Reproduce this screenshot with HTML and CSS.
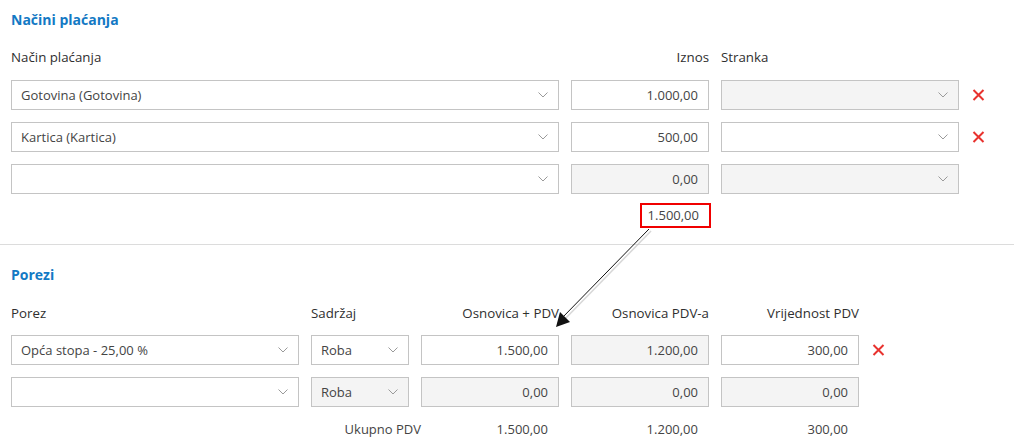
FILE: index.html
```html
<!DOCTYPE html>
<html lang="hr">
<head>
<meta charset="utf-8">
<title>Načini plaćanja</title>
<link rel="stylesheet" href="styles.css">
</head>
<body>
<div class="page">
  <section class="sec">
    <h2 class="title">Načini plaćanja</h2>
    <div class="grid pay-grid head">
      <div class="lbl">Način plaćanja</div>
      <div class="lbl r">Iznos</div>
      <div class="lbl">Stranka</div>
      <div></div>
    </div>
    <div class="grid pay-grid row">
      <div class="field sel"><span>Gotovina (Gotovina)</span><svg class="chev" viewBox="0 0 10 6"><path d="M0.5 0.5 L5 5 L9.5 0.5"/></svg></div>
      <div class="field num">1.000,00</div>
      <div class="field sel dis"><span></span><svg class="chev" viewBox="0 0 10 6"><path d="M0.5 0.5 L5 5 L9.5 0.5"/></svg></div>
      <svg class="del" viewBox="0 0 12 12"><path d="M1 1 L11 11 M11 1 L1 11"/></svg>
    </div>
    <div class="grid pay-grid row">
      <div class="field sel"><span>Kartica (Kartica)</span><svg class="chev" viewBox="0 0 10 6"><path d="M0.5 0.5 L5 5 L9.5 0.5"/></svg></div>
      <div class="field num">500,00</div>
      <div class="field sel"><span></span><svg class="chev" viewBox="0 0 10 6"><path d="M0.5 0.5 L5 5 L9.5 0.5"/></svg></div>
      <svg class="del" viewBox="0 0 12 12"><path d="M1 1 L11 11 M11 1 L1 11"/></svg>
    </div>
    <div class="grid pay-grid row">
      <div class="field sel"><span></span><svg class="chev" viewBox="0 0 10 6"><path d="M0.5 0.5 L5 5 L9.5 0.5"/></svg></div>
      <div class="field num dis">0,00</div>
      <div class="field sel dis"><span></span><svg class="chev" viewBox="0 0 10 6"><path d="M0.5 0.5 L5 5 L9.5 0.5"/></svg></div>
      <div></div>
    </div>
    <div class="grid pay-grid total-row">
      <div></div>
      <div class="total-cell"><span class="total-box">1.500,00</span></div>
      <div></div>
      <div></div>
    </div>
  </section>

  <div class="divider"></div>

  <section class="sec">
    <h2 class="title title2">Porezi</h2>
    <div class="grid tax-grid head">
      <div class="lbl">Porez</div>
      <div class="lbl">Sadržaj</div>
      <div class="lbl r">Osnovica + PDV</div>
      <div class="lbl r">Osnovica PDV-a</div>
      <div class="lbl r">Vrijednost PDV</div>
      <div></div>
    </div>
    <div class="grid tax-grid row">
      <div class="field sel"><span>Opća stopa - 25,00 %</span><svg class="chev" viewBox="0 0 10 6"><path d="M0.5 0.5 L5 5 L9.5 0.5"/></svg></div>
      <div class="field sel"><span>Roba</span><svg class="chev" viewBox="0 0 10 6"><path d="M0.5 0.5 L5 5 L9.5 0.5"/></svg></div>
      <div class="field num">1.500,00</div>
      <div class="field num dis">1.200,00</div>
      <div class="field num">300,00</div>
      <svg class="del" viewBox="0 0 12 12"><path d="M1 1 L11 11 M11 1 L1 11"/></svg>
    </div>
    <div class="grid tax-grid row">
      <div class="field sel"><span></span><svg class="chev" viewBox="0 0 10 6"><path d="M0.5 0.5 L5 5 L9.5 0.5"/></svg></div>
      <div class="field sel dis"><span>Roba</span><svg class="chev" viewBox="0 0 10 6"><path d="M0.5 0.5 L5 5 L9.5 0.5"/></svg></div>
      <div class="field num dis">0,00</div>
      <div class="field num dis">0,00</div>
      <div class="field num dis">0,00</div>
      <div></div>
    </div>
    <div class="grid tax-grid sum-row">
      <div class="sum-label">Ukupno PDV</div>
      <div class="sum">1.500,00</div>
      <div class="sum">1.200,00</div>
      <div class="sum">300,00</div>
      <div></div>
    </div>
  </section>

  <svg class="arrow" viewBox="0 0 1014 442" width="1014" height="442">
    <line x1="651" y1="231" x2="563" y2="321" stroke="#bdbdbd" stroke-width="1.5" opacity="0.6"/>
    <line x1="649" y1="229" x2="562" y2="318" stroke="#111" stroke-width="1"/>
    <polygon points="556,327 560,312 570,322" fill="#111"/>
  </svg>
</div>
</body>
</html>
```

FILE: styles.css
```css
* { box-sizing: border-box; }

html, body {
  margin: 0;
  padding: 0;
  background: #ffffff;
}

body {
  font-family: "Open Sans", "Liberation Sans", sans-serif;
  font-size: 13px;
  color: #333;
}

.page {
  position: relative;
  width: 1014px;
  height: 442px;
  padding-top: 10px;
  overflow: hidden;
}

.sec {
  padding: 0 11px;
}

.title {
  margin: 0;
  font-size: 14px;
  line-height: 19px;
  font-weight: 700;
  color: #1379c4;
}

.title2 {
  margin-top: 20px;
}

.grid {
  display: grid;
  column-gap: 12px;
  align-items: center;
}

.pay-grid {
  grid-template-columns: 548px 138px 238px auto;
}

.tax-grid {
  grid-template-columns: 288px 98px 138px 138px 138px auto;
}

.head {
  margin-top: 19px;
  line-height: 18px;
}

.tax-grid.head {
  margin-top: 20px;
}

.lbl {
  color: #2f2f2f;
  font-size: 13.3px;
  white-space: nowrap;
}

.lbl.r {
  text-align: right;
}

.row {
  margin-top: 12px;
}

.head + .row {
  margin-top: 14px;
}

.tax-grid.head + .row {
  margin-top: 13px;
}

.field {
  height: 30px;
  border: 1px solid #c4c4c4;
  background: #fff;
  color: #444;
  line-height: 28px;
  white-space: nowrap;
}

.field.dis {
  background: #f4f4f4;
}

.sel {
  display: flex;
  align-items: center;
  justify-content: space-between;
  padding: 0 10px 0 9px;
}

.num {
  text-align: right;
  padding: 0 10px 0 9px;
}

.chev {
  width: 10px;
  height: 6px;
  flex: none;
}

.chev path {
  fill: none;
  stroke: #9a9a9a;
  stroke-width: 1;
}

.del {
  width: 13px;
  height: 12px;
  margin-left: 1px;
}

.del path {
  fill: none;
  stroke: #e8322e;
  stroke-width: 2;
}

.total-row {
  margin-top: 9px;
}

.total-cell {
  display: flex;
  justify-content: flex-end;
  margin-right: -2px;
}

.total-box {
  display: inline-block;
  height: 25px;
  border: 2px solid #f00000;
  padding: 0 10px 0 6px;
  line-height: 21px;
  color: #444;
}

.divider {
  margin-top: 16px;
  height: 1px;
  background: #dcdcdc;
}

.sum-row {
  margin-top: 13px;
  line-height: 18px;
  color: #444;
}

.sum-label {
  grid-column: 1 / 3;
  justify-self: end;
  margin-right: -12px;
}

.sum {
  text-align: right;
  padding-right: 11px;
}

.arrow {
  position: absolute;
  left: 0;
  top: 0;
  pointer-events: none;
}
```
